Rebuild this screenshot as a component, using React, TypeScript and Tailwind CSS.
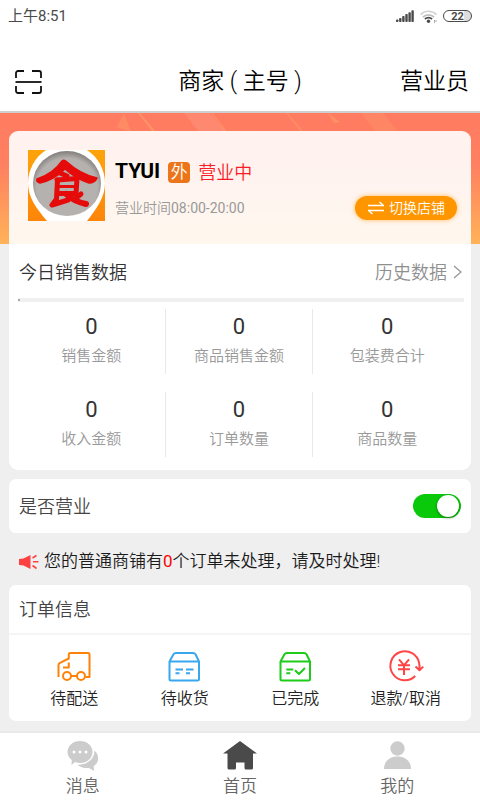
import { useState } from "react";

const stats = [
  { value: 0, label: "销售金额" },
  { value: 0, label: "商品销售金额" },
  { value: 0, label: "包装费合计" },
  { value: 0, label: "收入金额" },
  { value: 0, label: "订单数量" },
  { value: 0, label: "商品数量" },
];

function StatusBar() {
  return (
    <div className="flex h-8 items-center justify-between px-2 text-[#4a4a4a]">
      <span className="text-[15px] font-normal">上午8:51</span>
      <div className="flex items-center gap-1.5">
        <svg width="18" height="12" viewBox="0 0 18 12" fill="currentColor">
          <rect x="0" y="9.5" width="2.4" height="2.5" rx="0.8" />
          <rect x="3.1" y="8" width="2.4" height="4" rx="0.8" />
          <rect x="6.2" y="6" width="2.4" height="6" rx="0.8" />
          <rect x="9.3" y="4" width="2.4" height="8" rx="0.8" />
          <rect x="12.4" y="2.2" width="2.4" height="9.8" rx="0.8" />
          <rect x="15.4" y="0.2" width="2.4" height="11.8" rx="0.8" />
        </svg>
        <svg width="17" height="13" viewBox="0 0 17 13" fill="none" strokeWidth="1.7">
          <path d="M0.6 4.6 a11 11 0 0 1 15.8 0" stroke="#d2d2d2" />
          <path d="M2.9 7.2 a7.8 7.8 0 0 1 11.2 0" stroke="#bdbdbd" />
          <path d="M4.9 9.2 a5 5 0 0 1 7.2 0" stroke="#4a4a4a" />
          <circle cx="8.5" cy="11.2" r="1.7" fill="#4a4a4a" />
          <path d="M14.5 10v3M16 10v2" stroke="#9a9a9a" strokeWidth="0.8" />
        </svg>
        <span className="flex h-3 w-[29px] items-center justify-center rounded-full border border-[#4a4a4a] bg-[linear-gradient(90deg,#fff_75%,#dedede_75%)] text-[11px] leading-none font-bold">
          22
        </span>
      </div>
    </div>
  );
}

function Header() {
  return (
    <header className="grid h-[81px] grid-cols-3 items-center border-b-2 border-[#cfcfcf] px-[11px] pt-[21px] text-[23px] text-black">
      <button aria-label="扫一扫" className="ml-1 justify-self-start">
        <svg width="27" height="24" viewBox="0 0 27 24" fill="none" stroke="#111" strokeWidth="1.8">
          <path d="M1 8V3a2 2 0 0 1 2-2h6M17 1h7a2 2 0 0 1 2 2v5M26 16v5a2 2 0 0 1-2 2h-7M9 23H3a2 2 0 0 1-2-2v-5" />
          <path d="M0.5 12h26" />
        </svg>
      </button>
      <h1 className="justify-self-center whitespace-nowrap">商家 ( 主号 )</h1>
      <button className="justify-self-end">营业员</button>
    </header>
  );
}

function HeroPattern() {
  return (
    <svg
      className="absolute top-0 left-0 h-[131px] w-full"
      viewBox="0 0 480 131"
      preserveAspectRatio="none"
      fill="#ffae6c"
    >
      <path d="M124 0l-7 14 14 5z" opacity="0.3" />
      <path d="M140 0l15 18h-3L138 0z" opacity="0.5" />
      <path d="M184 0h26l15 18h-27z" fill="#ff9a88" opacity="0.4" />
      <path d="M213 0l14 18h-3L211 0z" opacity="0.3" />
      <path d="M288 0l15 18h-3L286 0z" opacity="0.3" />
      <path d="M328 0l12 9-6 1z" opacity="0.4" />
      <path d="M361 0h22l14 18h-22z" opacity="0.2" />
    </svg>
  );
}

function ShopLogo() {
  return (
    <svg width="77" height="71" viewBox="0 0 77 71" role="img" aria-label="食">
      <defs>
        <linearGradient id="logoBg" x1="0" y1="0" x2="0" y2="1">
          <stop offset="0" stopColor="#fda40a" />
          <stop offset="1" stopColor="#fd850a" />
        </linearGradient>
        <radialGradient id="logoPlate" cx="0.5" cy="0.56" r="0.56">
          <stop offset="0.8" stopColor="#b5b1ae" />
          <stop offset="1" stopColor="#807d7a" />
        </radialGradient>
      </defs>
      <rect width="77" height="71" fill="url(#logoBg)" />
      <path d="M18 0h41c11 7 18 20 18 33 0 14-8 25-18 38H19C8 58 0 47 0 33 0 20 7 7 18 0z" fill="#fff" />
      <ellipse cx="39" cy="33.5" rx="34" ry="32.5" fill="url(#logoPlate)" />
      <g stroke="#e60b0b" strokeLinecap="round" strokeLinejoin="round">
        <path
          d="M34 11Q36 9 39 12Q52 24 69 28Q67 33 61 33Q48 29 37 19Q26 30 12 33Q8 32 9 29Q25 24 34 11z"
          fill="#e60b0b"
          strokeWidth="1.5"
        />
        <g fill="none">
          <path d="M32 23l7 3" strokeWidth="5" />
          <path d="M29 30L49 28.5L48 43.5H30" strokeWidth="5" />
          <path d="M30 36.500h17" strokeWidth="3" />
          <path d="M29.500 30L28.500 49L24 55L40 50" strokeWidth="5" />
          <path d="M38 44Q45 51 58 54" strokeWidth="6" />
          <path d="M53 44l-5 4" strokeWidth="5" />
        </g>
      </g>
    </svg>
  );
}

function ShopInfo() {
  return (
    <div className="flex h-[113px] items-start rounded-t-[9px] bg-white/90 pt-[19px] pr-3.5 pl-[19px]">
      <ShopLogo />
      <div className="ml-2.5 flex flex-1 flex-col">
        <div className="flex h-11 items-center">
          <h2 className="text-[21px] font-bold text-black">TYUI</h2>
          <span className="ml-2 flex h-[21px] w-[22px] items-center justify-center rounded-sm bg-[#ec7519] text-[17px] leading-none text-white">
            外
          </span>
          <span className="ml-2 text-[18px] text-[#fb1c26]">营业中</span>
        </div>
        <div className="flex h-7 items-center justify-between">
          <span className="text-sm text-[#999]">
            营业时间<span className="font-normal">08:00-20:00</span>
          </span>
          <button className="flex h-6 w-[102px] items-center justify-center gap-1 rounded-full bg-[#ff9600] text-sm text-white shadow-[0_0_5px_#ff960099]">
            <svg width="18" height="14" viewBox="0 0 18 14" fill="none" stroke="#fff" strokeWidth="1.5">
              <path d="M1 4.500h16M12.500 1l4 3.500M17 9.500H1M5.500 13l-4-3.500" />
            </svg>
            切换店铺
          </button>
        </div>
      </div>
    </div>
  );
}

function SalesPanel() {
  return (
    <div className="rounded-b-[9px] bg-white pb-[13px] pl-[9px]">
      <div className="flex h-[54px] items-center justify-between pt-0.5 pr-[9px] text-[18px]">
        <h3 className="pl-px text-[#333]">今日销售数据</h3>
        <a href="#history" className="flex items-center gap-1.5 text-[#8f8f8f]">
          历史数据
          <svg width="9" height="14" viewBox="0 0 9 14" fill="none" stroke="#999" strokeWidth="1.4">
            <path d="M1 1l7 6-7 6" />
          </svg>
        </a>
      </div>
      <div className="mr-[7px] flex h-1 items-center bg-[#f0f0f0]">
        <span className="size-0.5 bg-[#aaa]" />
      </div>
      <div className="grid grid-cols-3 gap-y-[18px] pt-[7px] pr-2.5">
        {stats.map((stat) => (
          <div
            key={stat.label}
            className="flex h-[65px] flex-col items-center border-r border-[#e8e8e8] nth-[3n]:border-r-0"
          >
            <span className="h-[35px] text-[22px] leading-9 font-normal text-[#333]">{stat.value}</span>
            <span className="text-[15px] leading-6 text-[#999]">{stat.label}</span>
          </div>
        ))}
      </div>
    </div>
  );
}

function OpenSwitch() {
  const [open, setOpen] = useState(true);

  return (
    <label className="mt-[9px] flex h-[54px] items-center justify-between rounded-[7px] bg-white px-2.5 text-[18px] text-[#444]">
      是否营业
      <input
        type="checkbox"
        role="switch"
        checked={open}
        onChange={(e) => setOpen(e.target.checked)}
        className="flex h-6 w-12 appearance-none items-center rounded-full bg-[#ccc] pr-0.5 pl-px before:size-[22px] before:rounded-full before:bg-white before:shadow-[0_1px_3px_#0006] checked:justify-end checked:bg-[#0ac80a]"
      />
    </label>
  );
}

function Notice() {
  return (
    <p className="flex h-[52px] items-center gap-[5px] px-2.5 pt-1.5 text-[17px] text-[#1a1a1a]">
      <svg width="20" height="16" viewBox="0 0 20 16" fill="#ff4040">
        <path d="M0 5l4.500-.5L11.500 1v14l-7-3.500L0 11z" />
        <path d="M13.500 4L17.500 1.500M14 7.800H19.500M13.500 11.500L17.500 14.500" stroke="#ff4040" strokeWidth="1.6" />
      </svg>
      <span>
        您的普通商铺有<span className="font-normal text-[#f00]">0</span>个订单未处理，请及时处理!
      </span>
    </p>
  );
}

const orders = [
  {
    label: "待配送",
    color: "#ff8208",
    icon: (
      <>
        <path d="M1.500 26V14Q1.500 12.500 3 11.800L11.800 7.500V3.500Q11.800 2 13.300 2H31Q32.500 2 32.500 3.500V26H28.500" />
        <path d="M11.800 11.500V16.500H6" />
        <circle cx="10" cy="25" r="4" />
        <circle cx="24" cy="25" r="4" />
        <path d="M14 25h6" />
      </>
    ),
  },
  {
    label: "待收货",
    color: "#38a7ee",
    icon: (
      <>
        <path d="M2.500 10.500L6.500 3.300Q7.300 2 9 2H26Q27.700 2 28.500 3.300L32 10.500V28Q32 29.500 30.500 29.500H4Q2.500 29.500 2.500 28z" />
        <path d="M2.500 10.500H32" />
        <path d="M8.500 18.500h7.500M19 18.500h7.500M8.500 22.200h4M19 22.200h4" />
      </>
    ),
  },
  {
    label: "已完成",
    color: "#1dcb18",
    icon: (
      <>
        <path d="M2.500 10.500L6.500 3.300Q7.300 2 9 2H26Q27.700 2 28.500 3.300L32 10.500V28Q32 29.500 30.500 29.500H4Q2.500 29.500 2.500 28z" />
        <path d="M2.500 10.500H32" />
        <path d="M8.300 18.500h7M8.300 22.200h4M17 19.300l4 3.700 6-6" />
      </>
    ),
  },
  {
    label: "退款/取消",
    color: "#ff4545",
    icon: (
      <>
        <path d="M27.200 25A14.500 14.500 0 1 1 31.200 12.500Q31.800 15 31.500 19M27.500 15.600l4 3.700 3.700-3.700" />
        <path d="M11 8.300l5 6 5-6M10 14.300h12M10 18.300h12M16 14v10" />
      </>
    ),
  },
];

function OrderPanel() {
  return (
    <section className="rounded-[7px] bg-white">
      <h3 className="flex h-[50px] items-center border-b-2 border-[#f5f5f5] px-2.5 text-[18px] text-[#444]">
        订单信息
      </h3>
      <div className="grid h-[86px] grid-cols-4 px-2.5 pt-4">
        {orders.map((order) => (
          <button key={order.label} className="flex flex-col items-center text-base text-[#222]">
            <svg
              width="35"
              height="31"
              viewBox="0 0 35 31"
              fill="none"
              stroke={order.color}
              strokeWidth="2"
              strokeLinejoin="round"
              className="overflow-visible"
            >
              {order.icon}
            </svg>
            <span className="mt-[5px] leading-6">{order.label}</span>
          </button>
        ))}
      </div>
    </section>
  );
}

function TabBar() {
  return (
    <nav className="mt-auto grid h-[69px] grid-cols-3 border-t-2 border-[#e9e9e9] bg-white px-1 pt-2 text-[17px] text-[#666]">
      <a href="#messages" className="flex flex-col items-center">
        <svg width="32" height="30" viewBox="0 0 32 30" fill="#cccccc">
          <path d="M13 0c7 0 12.500 4.800 12.500 11S20 22 13 22c-1.800 0-3.500-.3-5-.9L4.500 24l.3-5C2 17 .5 14 .5 11 .5 4.800 6 0 13 0z" />
          <path d="M27.500 9.500c5 5 5 12-.9 15.500l.6 5-5.200-3c-4.500.5-8.500-.8-11.500-3.300 9 .5 17-5.200 17-14.200z" />
          <g fill="#fff">
            <circle cx="7" cy="11" r="1.5" />
            <circle cx="13" cy="11" r="1.5" />
            <circle cx="19" cy="11" r="1.5" />
          </g>
        </svg>
        <span className="leading-[30px]">消息</span>
      </a>
      <a href="#home" className="flex flex-col items-center">
        <svg width="34" height="30" viewBox="0 0 34 30" fill="#4a4a4a">
          <path d="M17 0L34 12.500H30V27Q30 28.500 28.500 28.500H23Q21.500 28.500 21.500 27V21.500H13V27Q13 28.500 11.500 28.500H6Q4.500 28.500 4.500 27V12.500H0z" />
        </svg>
        <span className="leading-[30px]">首页</span>
      </a>
      <a href="#mine" className="flex flex-col items-center">
        <svg width="27" height="30" viewBox="0 0 27 30" fill="#cccccc">
          <circle cx="13.5" cy="7.5" r="7.2" />
          <path d="M0 28C0 20 6 15.500 13.500 15.500S27 20 27 28z" />
        </svg>
        <span className="leading-[30px]">我的</span>
      </a>
    </nav>
  );
}

export default function App() {
  return (
    <div className="flex min-h-screen flex-col bg-white font-['Roboto','Noto_Sans_CJK_SC',sans-serif] font-[350]">
      <StatusBar />
      <Header />
      <main className="relative flex-1 bg-[#efefef] bg-[linear-gradient(#ff7b62,#ff8060_40%,#ffb259)] bg-[length:100%_131px] bg-no-repeat px-[9px] pt-[18px] pb-2.5">
        <HeroPattern />
        <section className="relative">
          <ShopInfo />
          <SalesPanel />
        </section>
        <OpenSwitch />
        <Notice />
        <OrderPanel />
      </main>
      <TabBar />
    </div>
  );
}
